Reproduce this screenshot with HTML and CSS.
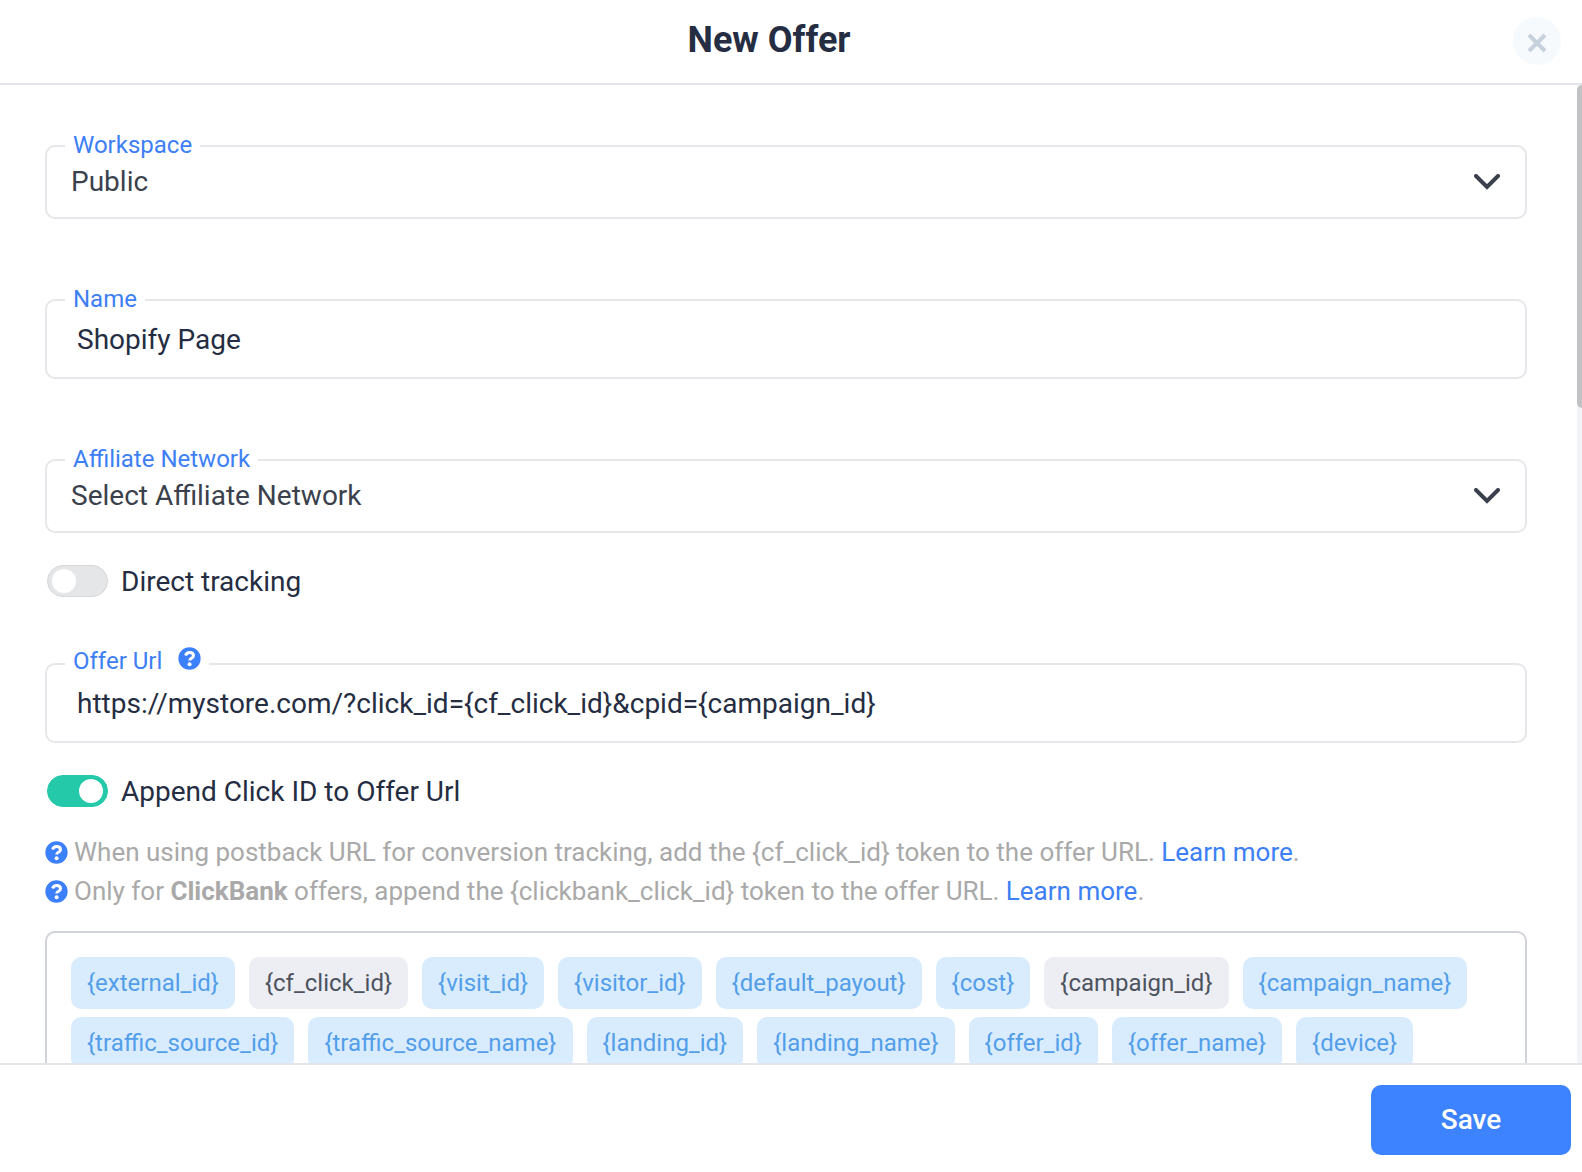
FILE: index.html
```html
<!DOCTYPE html>
<html lang="en">
<head>
    <meta charset="utf-8">
    <title>New Offer</title>
    <link rel="stylesheet" href="styles.css">
</head>
<body>
    <svg class="symbols" aria-hidden="true">
        <symbol id="icon-help" viewBox="0 0 512 512">
            <circle cx="256" cy="256" r="248"/>
            <path d="M168 190c14-42 48-66 92-66 50 0 84 28 84 68 0 60-84 60-84 110" fill="none" stroke="#fff" stroke-width="66"/>
            <circle cx="258" cy="382" r="44" fill="#fff"/>
        </symbol>
        <symbol id="icon-chevron" viewBox="0 0 26 16">
            <path d="M2 2l11 11L24 2" fill="none" stroke="currentColor" stroke-width="4" stroke-linecap="round"/>
        </symbol>
    </svg>
    <form class="modal">
        <header class="modal-header">
            <h1 class="modal-title">New Offer</h1>
            <button type="button" class="close" aria-label="Close">
                <svg class="close-icon" viewBox="0 0 20 20"><path d="M2 2l16 16M18 2L2 18"/></svg>
            </button>
        </header>
        <div class="modal-content">
            <main class="modal-body">
                <div class="field">
                    <label class="field-label" for="workspace">Workspace</label>
                    <div class="select-wrap">
                        <select class="select" id="workspace">
                            <option>Public</option>
                        </select>
                        <svg class="chevron"><use href="#icon-chevron"/></svg>
                    </div>
                </div>
                <div class="field">
                    <label class="field-label" for="name">Name</label>
                    <input class="input" type="text" id="name" value="Shopify Page">
                </div>
                <div class="field">
                    <label class="field-label" for="network">Affiliate Network</label>
                    <div class="select-wrap">
                        <select class="select" id="network">
                            <option>Select Affiliate Network</option>
                        </select>
                        <svg class="chevron"><use href="#icon-chevron"/></svg>
                    </div>
                </div>
                <label class="switch">
                    <input class="toggle" type="checkbox">
                    Direct tracking
                </label>
                <div class="field">
                    <label class="field-label with-help" for="url">Offer Url <svg class="help"><use href="#icon-help"/></svg></label>
                    <input class="input" type="text" id="url" value="https://mystore.com/?click_id={cf_click_id}&amp;cpid={campaign_id}">
                </div>
                <label class="switch">
                    <input class="toggle" type="checkbox" checked>
                    Append Click ID to Offer Url
                </label>
                <div class="hints">
                    <div class="hint">
                        <svg class="help"><use href="#icon-help"/></svg>
                        <span>When using postback URL for conversion tracking, add the {cf_click_id} token to the offer URL. <a href="#">Learn more</a>.</span>
                    </div>
                    <div class="hint">
                        <svg class="help"><use href="#icon-help"/></svg>
                        <span>Only for <b>ClickBank</b> offers, append the {clickbank_click_id} token to the offer URL. <a href="#">Learn more</a>.</span>
                    </div>
                </div>
                <div class="tokens">
                    <button type="button" class="token">{external_id}</button>
                    <button type="button" class="token used">{cf_click_id}</button>
                    <button type="button" class="token">{visit_id}</button>
                    <button type="button" class="token">{visitor_id}</button>
                    <button type="button" class="token">{default_payout}</button>
                    <button type="button" class="token">{cost}</button>
                    <button type="button" class="token used">{campaign_id}</button>
                    <button type="button" class="token">{campaign_name}</button>
                    <button type="button" class="token">{traffic_source_id}</button>
                    <button type="button" class="token">{traffic_source_name}</button>
                    <button type="button" class="token">{landing_id}</button>
                    <button type="button" class="token">{landing_name}</button>
                    <button type="button" class="token">{offer_id}</button>
                    <button type="button" class="token">{offer_name}</button>
                    <button type="button" class="token">{device}</button>
                </div>
            </main>
            <div class="scrollbar"><div class="scrollbar-thumb"></div></div>
        </div>
        <footer class="modal-footer">
            <button type="submit" class="save">Save</button>
        </footer>
    </form>
</body>
</html>
```
FILE: styles.css
```css
* {
    box-sizing: border-box;
}
body {
    margin: 0;
    font-family: Roboto, "Liberation Sans", sans-serif;
    font-size: 28px;
    color: #252d42;
    background: #fff;
}
button,
input,
select {
    font: inherit;
    color: inherit;
}
button {
    border: 0;
    cursor: pointer;
}
.symbols {
    display: none;
}
.modal {
    display: flex;
    flex-direction: column;
    height: 100vh;
}

/* Header */
.modal-header {
    display: flex;
    align-items: center;
    padding: 17px 21px 18px 25px;
    border-bottom: 2px solid #e4e5ea;
}
.modal-title {
    flex: 1;
    margin: 0;
    padding-bottom: 2px;
    font-size: 36px;
    line-height: 44px;
    font-weight: 700;
    text-align: center;
}
.close {
    display: flex;
    align-items: center;
    justify-content: center;
    width: 48px;
    height: 48px;
    padding: 4px 0 0;
    border-radius: 50%;
    background: #f7fafc;
}
.close-icon {
    width: 20px;
    height: 20px;
    fill: none;
    stroke: #c7d0dd;
    stroke-width: 4;
}

/* Scrolling area */
.modal-content {
    display: flex;
    flex: 1;
    min-height: 0;
}
.modal-body {
    flex: 1;
    min-width: 0;
    padding: 46px 50px 46px 45px;
    overflow-y: auto;
    scrollbar-width: none;
}
.scrollbar {
    width: 5px;
    background: #f2f4f8;
}
.scrollbar-thumb {
    height: 33%;
    border-radius: 5px 0 0 5px;
    background: #c1c2c4;
}

/* Fields */
.field {
    display: flex;
    flex-direction: column;
    margin-bottom: 66px;
}
.field-label {
    display: flex;
    align-items: center;
    gap: 16px;
    align-self: flex-start;
    z-index: 1;
    margin: 0 0 -14px 20px;
    padding: 0 8px;
    font-size: 24px;
    line-height: 28px;
    color: #3d80f5;
    background: #fff;
}
.with-help {
    align-items: flex-start;
    margin-top: -2px;
    margin-bottom: -12px;
}
.input,
.select {
    width: 100%;
    border: 2px solid #e6e7ea;
    border-radius: 10px;
    background: #fff;
    outline: none;
}
.input {
    height: 80px;
    padding: 0 30px;
}
.select-wrap {
    display: grid;
    align-items: center;
}
.select-wrap > * {
    grid-area: 1 / 1;
}
.select {
    height: 74px;
    padding: 0 60px 2px 24px;
    appearance: none;
    color: #3b414c;
}
.chevron {
    justify-self: end;
    width: 26px;
    height: 16px;
    margin-right: 27px;
    color: #3b414c;
    pointer-events: none;
}
.help {
    flex: none;
    width: 23px;
    height: 23px;
    fill: #3d80fc;
}

/* Switches */
.switch {
    display: flex;
    align-items: center;
    gap: 13px;
    height: 32px;
    margin: -34px 0 52px 2px;
}
.toggle {
    display: flex;
    align-items: center;
    width: 61px;
    height: 32px;
    margin: 0;
    padding: 0 4px;
    border: 1px solid #d5d7d9;
    border-radius: 16px;
    background: #e5e6e8;
    appearance: none;
}
.toggle::before {
    content: "";
    width: 24px;
    height: 24px;
    border-radius: 50%;
    background: #fff;
}
.toggle:checked {
    justify-content: flex-end;
    border-color: #23c9a9;
    background: #23c9a9;
}

/* Hints and tokens */
.hints {
    margin: -26px 0 20px;
}
.hint {
    display: flex;
    align-items: center;
    gap: 6px;
    font-size: 26px;
    line-height: 39px;
    color: #a9a9a9;
}
.hint a {
    color: #3d80f5;
    text-decoration: none;
}
.tokens {
    display: flex;
    flex-wrap: wrap;
    gap: 8px 14px;
    padding: 24px;
    border: 2px solid #d0d3d8;
    border-radius: 10px;
}
.token {
    height: 52px;
    padding: 0 16px;
    border-radius: 10px;
    font-size: 24px;
    color: #539ee9;
    background: #d9ecfe;
}
.token.used {
    color: #4d535e;
    background: #eceef4;
}

/* Footer */
.modal-footer {
    display: flex;
    justify-content: flex-end;
    padding: 20px 11px 17px;
    border-top: 2px solid #e4e5ea;
}
.save {
    width: 200px;
    height: 70px;
    padding: 0 0 2px;
    border-radius: 10px;
    font-weight: 500;
    color: #fff;
    background: #3d82ff;
}
```
